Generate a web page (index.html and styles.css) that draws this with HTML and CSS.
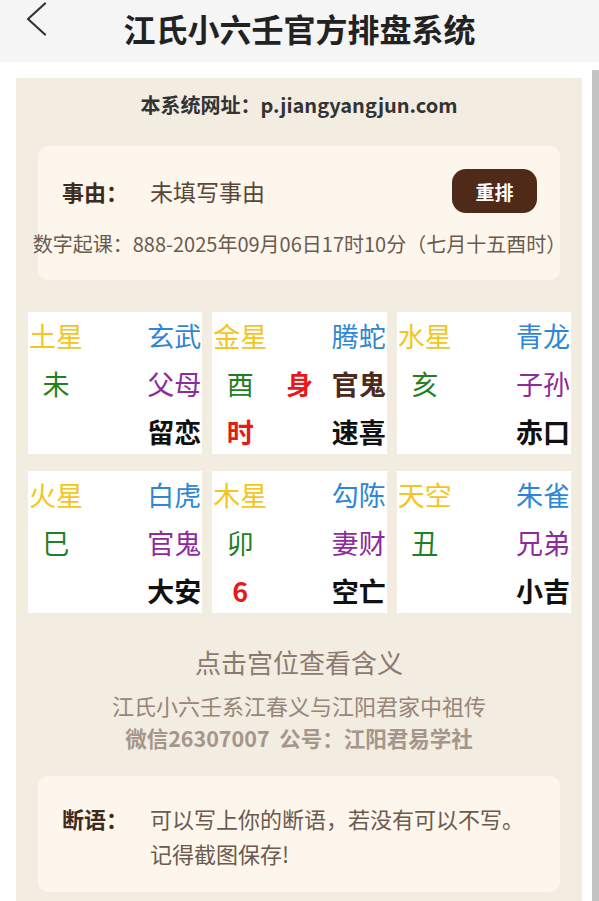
FILE: index.html
```html
<!DOCTYPE html>
<html lang="zh">
<head>
<meta charset="utf-8">
<title>江氏小六壬官方排盘系统</title>
<link rel="stylesheet" href="styles.css">
</head>
<body>
<header class="topbar">
  <span class="back" aria-label="返回">
    <svg width="22" height="34" viewBox="0 0 22 34"><path d="M19 1.5 L2 17 L19 32.5" fill="none" stroke="#333" stroke-width="2.2" stroke-linecap="round" stroke-linejoin="round"/></svg>
  </span>
  <h1 class="title">江氏小六壬官方排盘系统</h1>
  <span></span>
</header>
<div class="page">
  <main class="panel">
    <p class="site">本系统网址：p.jiangyangjun.com</p>
    <section class="card info">
      <div class="reason-row">
        <span class="label">事由：</span>
        <span class="reason">未填写事由</span>
        <button class="redo">重排</button>
      </div>
      <p class="cast">数字起课：888-2025年09月06日17时10分（七月十五酉时）</p>
    </section>

    <div class="grid">
      <div class="cell">
        <span class="star">土星</span><span></span><span class="god">玄武</span>
        <span class="branch">未</span><span></span><span class="kin">父母</span>
        <span></span><span></span><span class="palace">留恋</span>
      </div>
      <div class="cell">
        <span class="star">金星</span><span></span><span class="god">腾蛇</span>
        <span class="branch">酉</span><span class="mark">身</span><span class="kin self">官鬼</span>
        <span class="mark">时</span><span></span><span class="palace">速喜</span>
      </div>
      <div class="cell">
        <span class="star">水星</span><span></span><span class="god">青龙</span>
        <span class="branch">亥</span><span></span><span class="kin">子孙</span>
        <span></span><span></span><span class="palace">赤口</span>
      </div>
      <div class="cell">
        <span class="star">火星</span><span></span><span class="god">白虎</span>
        <span class="branch">巳</span><span></span><span class="kin">官鬼</span>
        <span></span><span></span><span class="palace">大安</span>
      </div>
      <div class="cell">
        <span class="star">木星</span><span></span><span class="god">勾陈</span>
        <span class="branch">卯</span><span></span><span class="kin">妻财</span>
        <span class="mark">6</span><span></span><span class="palace">空亡</span>
      </div>
      <div class="cell">
        <span class="star">天空</span><span></span><span class="god">朱雀</span>
        <span class="branch">丑</span><span></span><span class="kin">兄弟</span>
        <span></span><span></span><span class="palace">小吉</span>
      </div>
    </div>

    <p class="hint">点击宫位查看含义</p>
    <p class="credit">江氏小六壬系江春义与江阳君家中祖传</p>
    <p class="contact">微信26307007&nbsp; 公号：江阳君易学社</p>

    <section class="card verdict">
      <span class="label">断语：</span>
      <div class="verdict-text">
        <p>可以写上你的断语，若没有可以不写。</p>
        <p>记得截图保存!</p>
      </div>
    </section>
  </main>
  <div class="scrollbar"></div>
</div>
</body>
</html>
```

FILE: styles.css
```css
* {
  box-sizing: border-box;
  margin: 0;
  padding: 0;
}

html,
body {
  width: 599px;
  height: 901px;
  overflow: hidden;
}

body {
  font-family: "Noto Sans CJK SC", "Noto Sans", "Liberation Sans", sans-serif;
  background: #ffffff;
  color: #333333;
}

/* ---------- top bar ---------- */
.topbar {
  height: 62px;
  background: #f5f5f5;
  display: grid;
  grid-template-columns: 1fr auto 1fr;
  align-items: start;
}

.back {
  margin-left: 26px;
  margin-top: 2px;
  width: 22px;
  height: 34px;
  display: block;
}

.back svg {
  display: block;
}

.title {
  margin-top: 8px;
  font-size: 32px;
  line-height: 40px;
  font-weight: 700;
  color: #222222;
}

/* ---------- page ---------- */
.page {
  display: flex;
  height: 839px;
}

.panel {
  margin-left: 16px;
  margin-top: 16px;
  width: 566px;
  background: #f2ece1;
  display: flex;
  flex-direction: column;
  padding-bottom: 20px;
}

.scrollbar {
  margin-left: 10px;
  margin-top: 8px;
  width: 7px;
  background: #c4c4c4;
}

.site {
  margin-top: 14px;
  text-align: center;
  font-size: 20px;
  line-height: 26px;
  font-weight: 700;
  color: #333333;
}

.card {
  margin: 0 22px;
  background: #fdf6ec;
  border-radius: 10px;
}

.info {
  margin-top: 28px;
  padding: 23px 23px 22px 24px;
}

.reason-row {
  display: flex;
  align-items: center;
  height: 44px;
}

.label {
  width: 88px;
  flex: none;
  font-size: 22px;
  font-weight: 700;
  color: #3d2b20;
}

.reason {
  flex: 1;
  font-size: 23px;
  color: #5a4639;
}

.redo {
  width: 85px;
  height: 44px;
  border: none;
  border-radius: 14px;
  background: #4f2a18;
  color: #ffffff;
  font-family: inherit;
  font-size: 19px;
  font-weight: 700;
}

.cast {
  margin: 17px -40px 0;
  text-align: center;
  white-space: nowrap;
  font-size: 20px;
  line-height: 28px;
  color: #6b5a4f;
}

/* ---------- grid of palaces ---------- */
.grid {
  margin: 32px 11px 0 12px;
  display: grid;
  grid-template-columns: repeat(3, 1fr);
  column-gap: 10px;
  row-gap: 17px;
}

.cell {
  height: 142px;
  background: #ffffff;
  padding: 0 1px;
  display: grid;
  grid-template-columns: 2em 1fr 2em;
  grid-template-rows: repeat(3, 48px);
  font-size: 27px;
  line-height: 48px;
  white-space: nowrap;
}

.cell > span {
  text-align: center;
}

.star {
  color: #f3c523;
}

.god {
  color: #2f86d4;
}

.branch {
  color: #1f7f22;
}

.kin {
  color: #8e2a9c;
}

.kin.self {
  color: #4a2a1c;
  font-weight: 700;
}

.palace {
  color: #111111;
  font-weight: 700;
}

.mark {
  color: #e31b1b;
  font-weight: 700;
}

/* ---------- footer texts ---------- */
.hint {
  margin-top: 33px;
  text-align: center;
  font-size: 26px;
  line-height: 32px;
  color: #8a7a70;
}

.credit {
  margin-top: 12px;
  text-align: center;
  font-size: 22px;
  line-height: 30px;
  color: #978679;
}

.contact {
  margin-top: 3px;
  text-align: center;
  font-size: 21.5px;
  line-height: 30px;
  font-weight: 700;
  color: #a4968b;
}

.verdict {
  margin-top: 23px;
  padding: 25px 23px 21px 24px;
  display: flex;
  align-items: flex-start;
}

.verdict .label {
  line-height: 35px;
}

.verdict-text {
  font-size: 22px;
  line-height: 35px;
  color: #6b5a4f;
}
```
